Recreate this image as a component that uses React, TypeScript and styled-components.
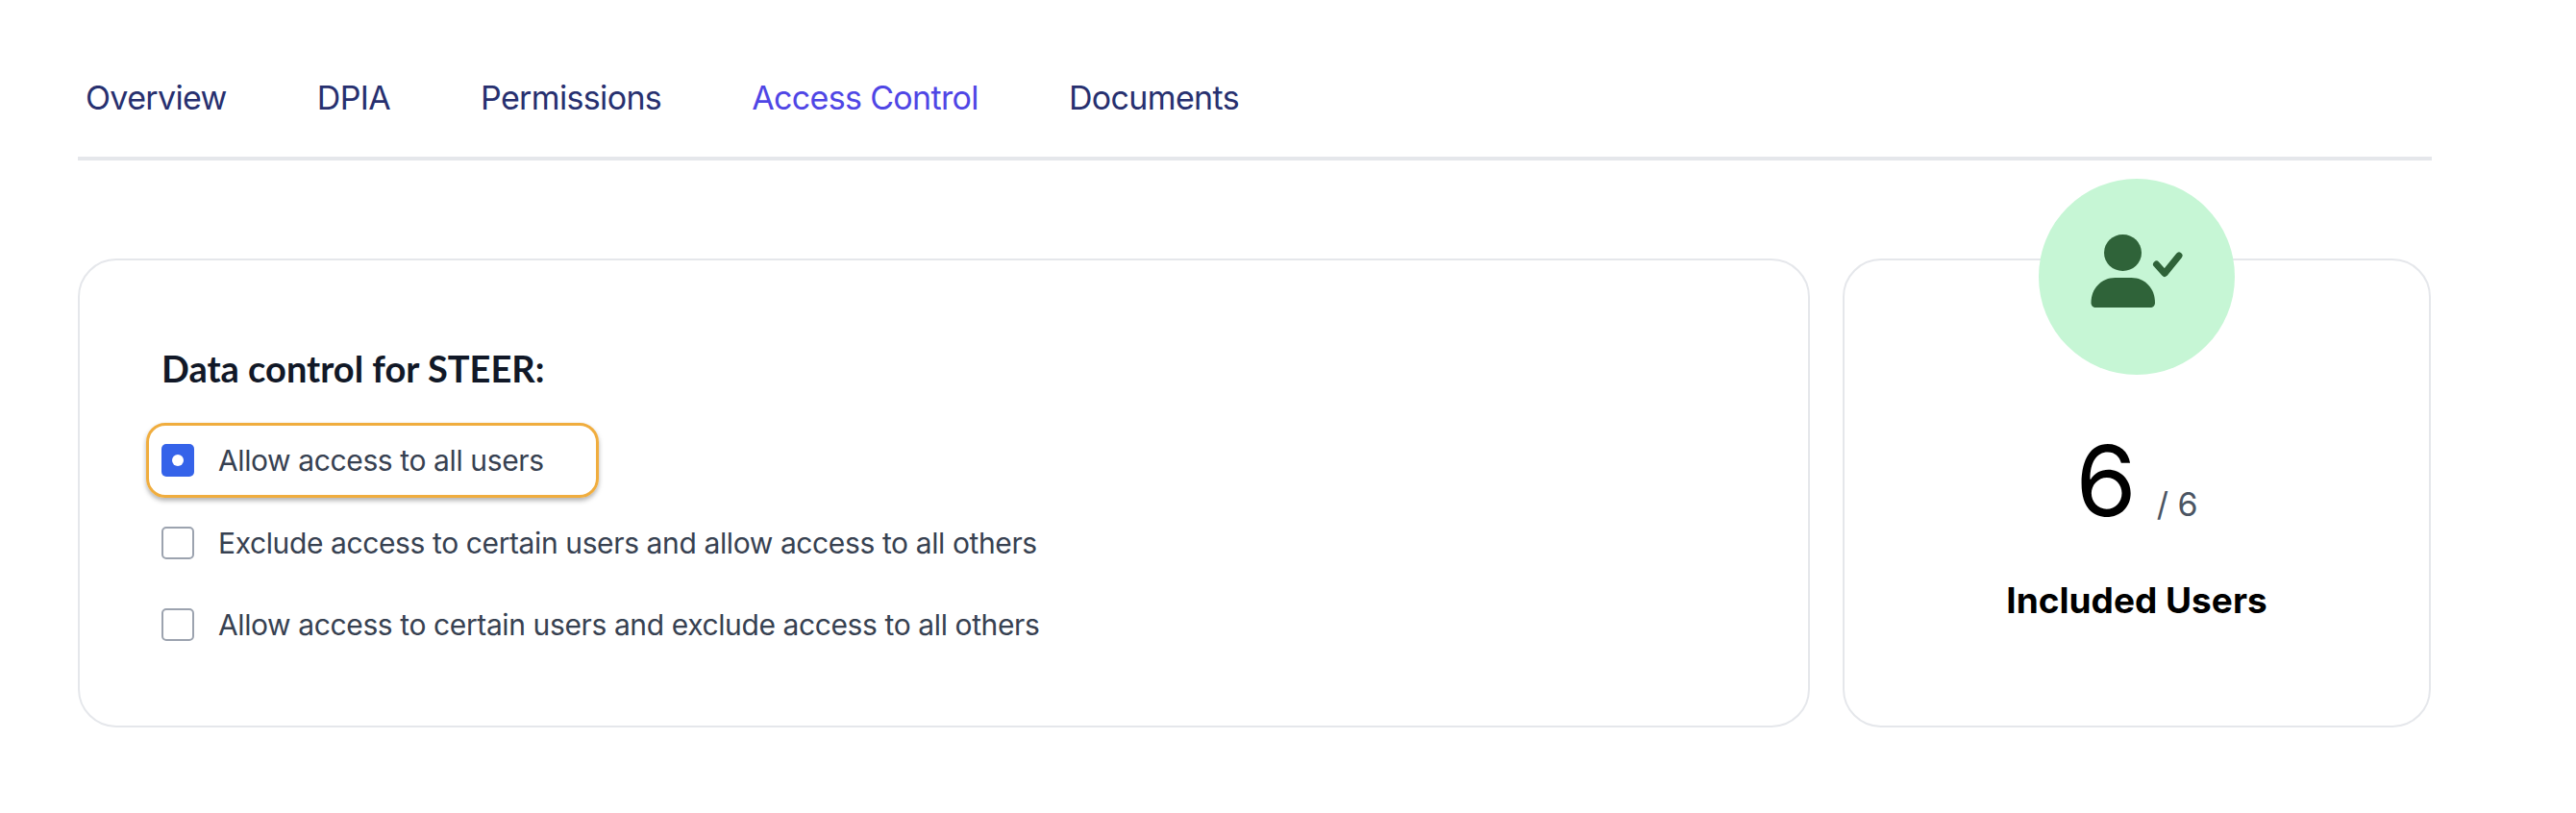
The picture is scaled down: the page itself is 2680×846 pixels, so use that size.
import React, { FC } from "react";
import styled, { createGlobalStyle } from "styled-components";

const GlobalStyle = createGlobalStyle`
  html, body {
    margin: 0;
    padding: 0;
    background: #ffffff;
    font-family: Inter, "Liberation Sans", sans-serif;
  }
  * {
    box-sizing: border-box;
  }
`;

const Page = styled.div`
  width: 2680px;
  height: 846px;
  padding: 0 150px 0 81px;
`;

const TabBar = styled.nav`
  display: flex;
  height: 167px;
  padding: 82px 0 0 8px;
  gap: 94px;
  border-bottom: 4px solid #e5e7eb;
`;

const Tab = styled.a<{ $active?: boolean }>`
  font-size: 34px;
  line-height: 40px;
  letter-spacing: -0.65px;
  color: ${({ $active }) => ($active ? "#4f46e5" : "#27306f")};
`;

const Cards = styled.div`
  display: flex;
  gap: 34px;
  margin-top: 102px;
`;

const Card = styled.section`
  height: 488px;
  border: 2px solid #e5e7eb;
  border-radius: 40px;
  background: #ffffff;
`;

const ControlCard = styled(Card)`
  width: 1802px;
  padding: 90px 0 0 85px;
`;

const Heading = styled.h2`
  margin: 0 0 35px;
  font-family: Lato, sans-serif;
  font-size: 38px;
  line-height: 44px;
  font-weight: 700;
  color: #111827;
`;

const Option = styled.label<{ $focused?: boolean }>`
  display: flex;
  align-items: center;
  gap: 25px;
  width: ${({ $focused }) => ($focused ? "471px" : "fit-content")};
  height: 78px;
  margin-left: -16px;
  padding: 0 13px;
  margin-bottom: 7.5px;
  border-radius: 20px;
  border: 3px solid ${({ $focused }) => ($focused ? "#f0ad3e" : "transparent")};
  box-shadow: ${({ $focused }) =>
    $focused ? "0 3px 5px rgba(0, 0, 0, 0.3)" : "none"};
  font-size: 30px;
  letter-spacing: -0.39px;
  color: #374151;
`;

const Box = styled.span<{ $checked?: boolean }>`
  flex: none;
  display: flex;
  align-items: center;
  justify-content: center;
  width: 34px;
  height: 34px;
  border-radius: 5px;
  background: ${({ $checked }) => ($checked ? "#3563e9" : "#ffffff")};
  border: ${({ $checked }) => ($checked ? "none" : "2px solid #9ca3af")};
`;

const Dot = styled.span`
  width: 12px;
  height: 12px;
  border-radius: 50%;
  background: #ffffff;
`;

const UsersCard = styled(Card)`
  position: relative;
  width: 612px;
  display: flex;
  flex-direction: column;
  align-items: center;
  padding-top: 171px;
`;

const Badge = styled.div`
  position: absolute;
  top: -85px;
  left: 202px;
  width: 204px;
  height: 204px;
  border-radius: 50%;
  background: #c6f6d5;
`;

const Count = styled.div`
  display: flex;
  align-items: baseline;
  gap: 21px;
  color: #000000;
  font-size: 102px;
  font-weight: 400;
  line-height: 116px;
`;

const Total = styled.span`
  font-size: 34px;
  font-weight: 400;
  color: #4b5563;
`;

const Caption = styled.div`
  margin-top: 20px;
  font-size: 37px;
  font-weight: 700;
  line-height: 44px;
  color: #000000;
`;

const UserCheckIcon: FC = () => (
  <svg width="204" height="204" viewBox="0 0 204 204">
    <ellipse cx="87.5" cy="77" rx="19.5" ry="19" fill="#2f6339" />
    <path
      d="M54.5 129c0-15 11-26 25-26h17c14 0 24.500 11 24.500 26 0 3-2 5-5 5H59.500c-3 0-5-2-5-5z"
      fill="#2f6339"
    />
    <path
      d="M122.500 89l8.500 9.500 15-18.500"
      fill="none"
      stroke="#2f6339"
      strokeWidth="7"
      strokeLinecap="round"
      strokeLinejoin="round"
    />
  </svg>
);

const tabs = ["Overview", "DPIA", "Permissions", "Access Control", "Documents"];

const options = [
  "Allow access to all users",
  "Exclude access to certain users and allow access to all others",
  "Allow access to certain users and exclude access to all others",
];

const App: FC = () => (
  <Page>
    <GlobalStyle />
    <TabBar>
      {tabs.map((tab) => (
        <Tab key={tab} $active={tab === "Access Control"}>
          {tab}
        </Tab>
      ))}
    </TabBar>
    <Cards>
      <ControlCard>
        <Heading>Data control for STEER:</Heading>
        {options.map((option, index) => (
          <Option key={option} $focused={index === 0}>
            <Box $checked={index === 0}>{index === 0 && <Dot />}</Box>
            {option}
          </Option>
        ))}
      </ControlCard>
      <UsersCard>
        <Badge>
          <UserCheckIcon />
        </Badge>
        <Count>
          6<Total>/ 6</Total>
        </Count>
        <Caption>Included Users</Caption>
      </UsersCard>
    </Cards>
  </Page>
);

export default App;
